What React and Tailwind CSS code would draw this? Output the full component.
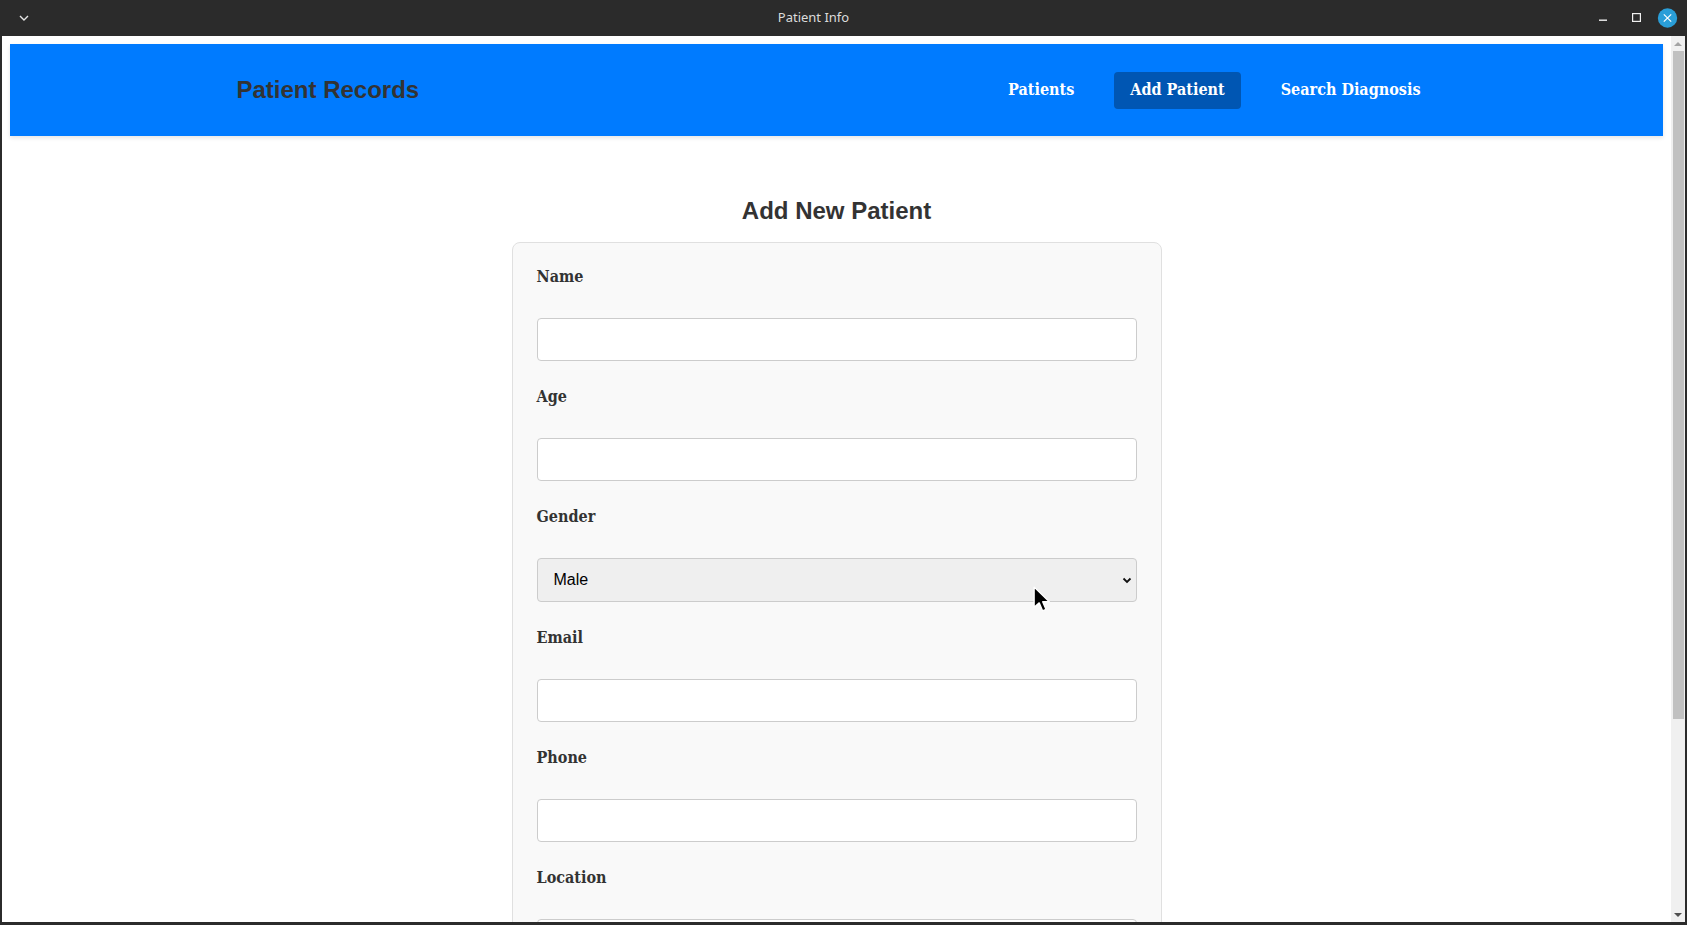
import React from "react";

const serif = { fontFamily: '"DejaVu Serif Condensed", "DejaVu Serif", serif', fontStretch: "condensed" };

function Field({ label, children }) {
  return (
    <div className="mb-[26px]">
      <label className="block leading-[20px] mb-[31px] text-[16px] font-bold text-[#333]" style={serif}>
        {label}
      </label>
      {children}
    </div>
  );
}

function TextInput() {
  return <input type="text" className="block w-full h-[43px] border border-[#ccc] rounded-[4px] bg-white outline-none" />;
}

export default function App() {
  return (
    <div className="w-[1687px] h-[925px] bg-[#2b2b2b] flex flex-col overflow-hidden relative">
      {/* title bar */}
      <div className="h-[36px] flex items-center shrink-0">
        <div className="w-[48px] flex justify-center">
          <svg width="10" height="6" viewBox="0 0 10 6">
            <path d="M1 1 L5 5 L9 1" stroke="#e6e6e6" strokeWidth="1.4" fill="none" />
          </svg>
        </div>
        <div className="w-[1531px] text-center text-[13px] text-[#dcdcdc]" style={{ fontFamily: '"Noto Sans", sans-serif' }}>
          Patient Info
        </div>
        <div className="flex items-center h-full">
          <svg className="ml-[20px]" width="8" height="36" viewBox="0 0 8 36">
            <rect x="0" y="19.5" width="8" height="1.4" fill="#f0f0f0" />
          </svg>
          <svg className="ml-[25px]" width="9" height="36" viewBox="0 0 9 36">
            <rect x="0.6" y="13.6" width="7.8" height="7.8" stroke="#f0f0f0" strokeWidth="1.2" fill="none" />
          </svg>
          <svg className="ml-[16px]" width="21" height="36" viewBox="0 0 21 36">
            <circle cx="10.5" cy="18" r="9.7" fill="#2a9ed8" />
            <path d="M6.8 14.3 L14.2 21.7 M14.2 14.3 L6.8 21.7" stroke="#ffffff" strokeWidth="1.2" />
          </svg>
        </div>
      </div>

      {/* body */}
      <div className="flex-1 flex pl-[2px] pr-[2px] pb-[3px] min-h-0">
        <div className="flex-1 bg-white overflow-hidden p-[8px]">
          <nav className="h-[92px] bg-[#007bff] shadow-[0_2px_4px_rgba(0,0,0,0.1)]">
            <div className="w-[1200px] mx-auto h-full flex items-center justify-between">
              <div className="text-[24px] font-bold text-[#333] leading-none" style={{ fontFamily: '"Liberation Sans", Arial, sans-serif' }}>
                Patient Records
              </div>
              <div className="flex items-center gap-[24px] text-white text-[16px] font-bold" style={serif}>
                <a className="px-[16px] h-[37px] flex items-center rounded-[4px]">Patients</a>
                <a className="px-[16px] h-[37px] flex items-center rounded-[4px] bg-[#0056b3]">Add Patient</a>
                <a className="px-[16px] h-[37px] flex items-center rounded-[4px]">Search Diagnosis</a>
              </div>
            </div>
          </nav>

          <h2
            className="mt-[61px] mb-[17px] text-center text-[24px] leading-[28px] font-bold text-[#333]"
            style={{ fontFamily: '"Liberation Sans", Arial, sans-serif' }}
          >
            Add New Patient
          </h2>

          <div className="w-[650px] mx-auto bg-[#f9f9f9] border border-[#e0e0e0] rounded-[8px] p-[24px]">
            <Field label="Name"><TextInput /></Field>
            <Field label="Age"><TextInput /></Field>
            <Field label="Gender">
              <div className="relative">
                <select
                  className="block w-full h-[44px] border border-[#ccc] rounded-[4px] bg-[#efefef] pl-[16px] text-[16px] text-black appearance-none outline-none"
                  style={{ fontFamily: '"Liberation Sans", Arial, sans-serif' }}
                  defaultValue="Male"
                >
                  <option>Male</option>
                  <option>Female</option>
                  <option>Other</option>
                </select>
                <svg className="absolute right-[5px] top-[19px] pointer-events-none" width="10" height="7" viewBox="0 0 10 7">
                  <path d="M1.5 1.5 L5 5 L8.5 1.5" stroke="#111" strokeWidth="1.8" fill="none" />
                </svg>
              </div>
            </Field>
            <Field label="Email"><TextInput /></Field>
            <Field label="Phone"><TextInput /></Field>
            <Field label="Location"><TextInput /></Field>
          </div>
        </div>

        {/* scrollbar */}
        <div className="w-[14px] bg-[#f0f0f0] flex flex-col items-center">
          <svg className="mt-[5px]" width="10" height="6" viewBox="0 0 10 6">
            <path d="M1 5 L5 1 L9 5 Z" fill="#a3a3a3" />
          </svg>
          <div className="mt-[4px] w-[11px] h-[668px] bg-[#c1c1c1]" />
          <div className="flex-1" />
          <svg className="mb-[4px]" width="10" height="6" viewBox="0 0 10 6">
            <path d="M1 1 L9 1 L5 5 Z" fill="#505050" />
          </svg>
        </div>
      </div>

      {/* mouse cursor */}
      <svg className="absolute left-[1033px] top-[586px] pointer-events-none" width="18" height="27" viewBox="0 0 16 24">
        <path d="M1 1 L1 19 L5.5 15 L8.5 22 L11.5 20.7 L8.6 14 L14.5 14 Z" fill="#000" stroke="#fff" strokeWidth="1.2" strokeLinejoin="round" />
      </svg>
    </div>
  );
}
